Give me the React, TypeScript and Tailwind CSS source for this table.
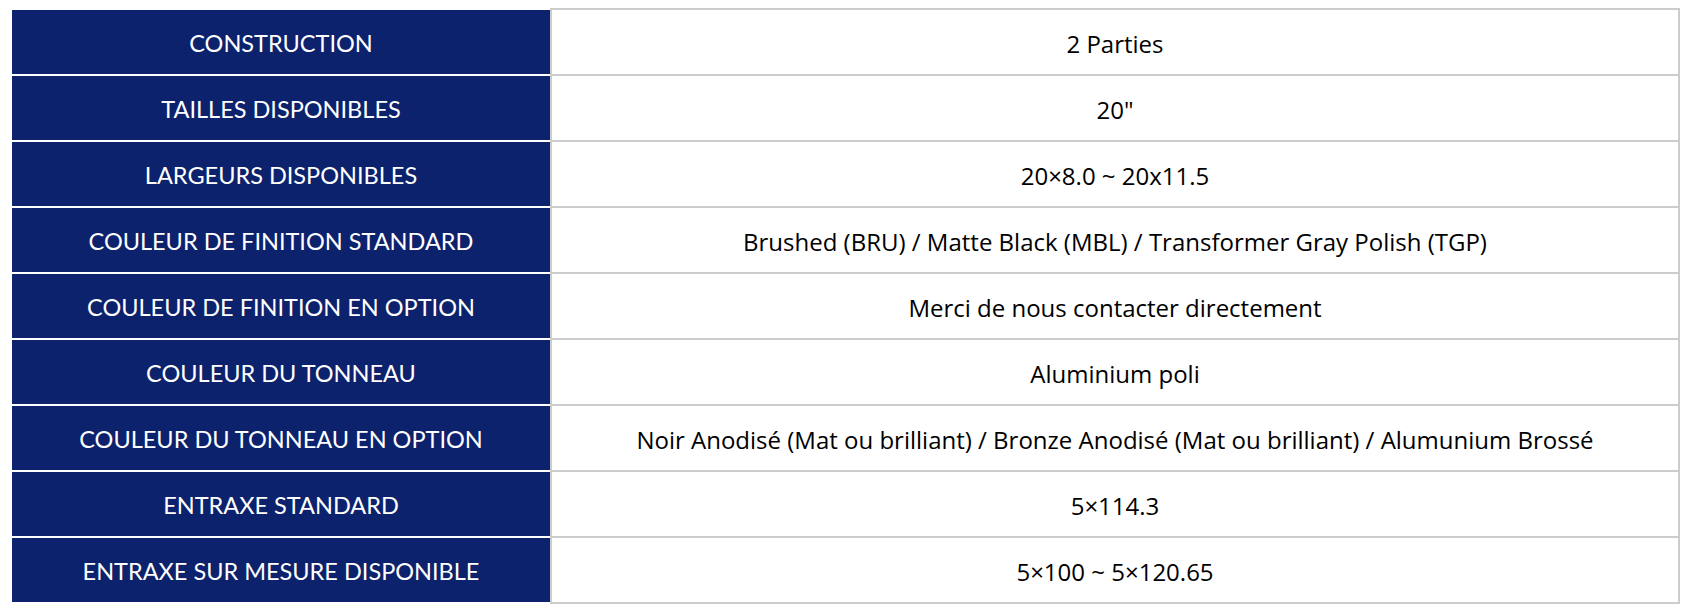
import React from "react";

const rows: [string, string][] = [
  ["CONSTRUCTION", "2 Parties"],
  ["TAILLES DISPONIBLES", "20\""],
  ["LARGEURS DISPONIBLES", "20×8.0 ~ 20x11.5"],
  ["COULEUR DE FINITION STANDARD", "Brushed (BRU) / Matte Black (MBL) / Transformer Gray Polish (TGP)"],
  ["COULEUR DE FINITION EN OPTION", "Merci de nous contacter directement"],
  ["COULEUR DU TONNEAU", "Aluminium poli"],
  ["COULEUR DU TONNEAU EN OPTION", "Noir Anodisé (Mat ou brilliant) / Bronze Anodisé (Mat ou brilliant) / Alumunium Brossé"],
  ["ENTRAXE STANDARD", "5×114.3"],
  ["ENTRAXE SUR MESURE DISPONIBLE", "5×100 ~ 5×120.65"],
];

export default function App() {
  return (
    <div className="w-[1690px] h-[616px] bg-white pt-[8px] pl-[10px]">
      <div className="w-[1670px] flex flex-col">
        {rows.map(([k, v], i) => {
          const last = i === rows.length - 1;
          return (
            <div key={i} className={last ? "flex h-[68px]" : "flex h-[66px]"}>
              <div
                className={
                  "w-[540px] flex items-center justify-center pt-[3px] border-t-2 border-l-2 border-white bg-[#0c226c] bg-clip-padding text-white text-[23.5px] font-['Lato',sans-serif] " +
                  (last ? "border-b-2" : "")
                }
              >
                {k}
              </div>
              <div
                className={
                  "flex-1 flex items-center justify-center pt-[3px] border-t-2 border-l-2 border-r-2 border-[#cccccc] text-black text-[24px] font-['Open_Sans',sans-serif] " +
                  (last ? "border-b-2" : "")
                }
              >
                {v}
              </div>
            </div>
          );
        })}
      </div>
    </div>
  );
}
